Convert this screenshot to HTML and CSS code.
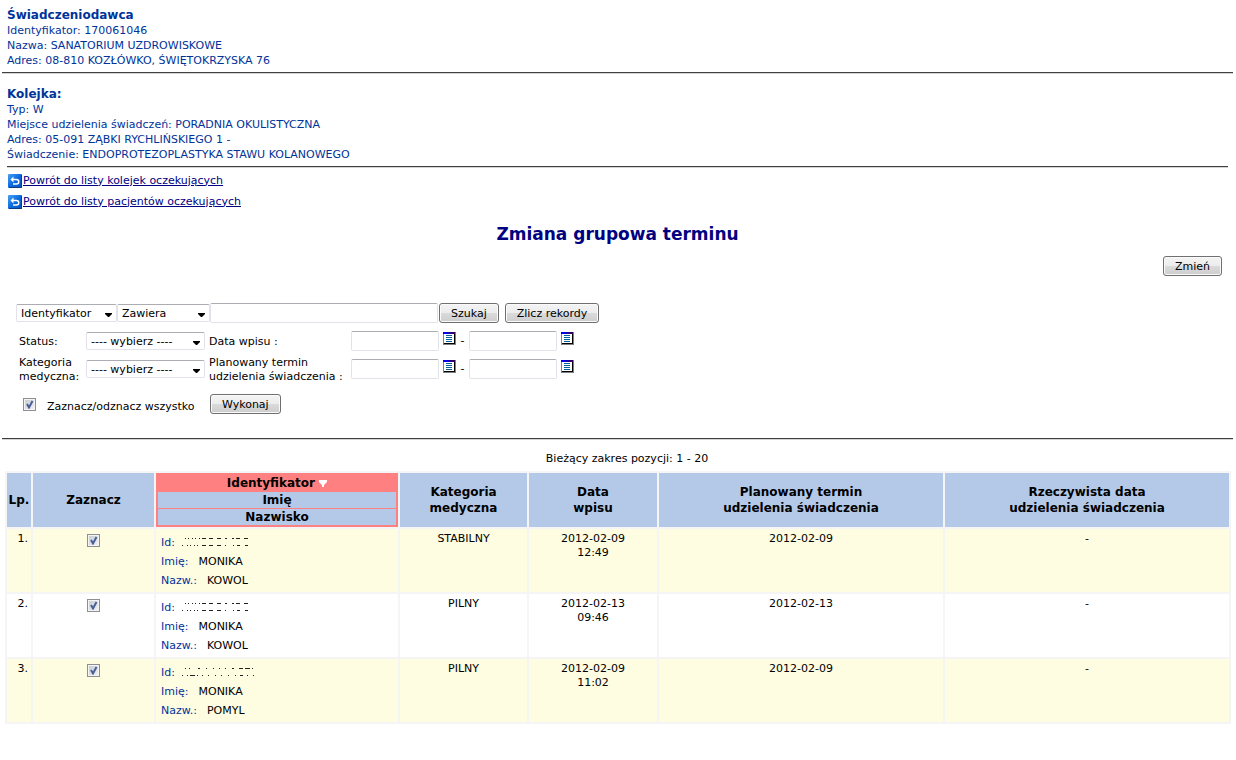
FILE: index.html
```html
<!DOCTYPE html>
<html lang="pl">
<head>
<meta charset="utf-8">
<title>Zmiana grupowa terminu</title>
<link rel="stylesheet" href="styles.css">
</head>
<body>
<svg class="defs" aria-hidden="true">
  <defs>
    <linearGradient id="blue" x1="0" y1="0" x2="1" y2="1"><stop offset="0" stop-color="#4aa0f4"/><stop offset=".5" stop-color="#0a6be0"/><stop offset="1" stop-color="#0b51b8"/></linearGradient>
    <linearGradient id="bar" x1="0" y1="0" x2="1" y2="0"><stop offset=".2" stop-color="#0000ff"/><stop offset=".8" stop-color="#300060"/></linearGradient>
    <symbol id="back" viewBox="0 0 14 14">
      <rect width="14" height="14" rx="1" fill="url(#blue)"/>
      <path d="M13.5 1v12.5H1" fill="none" stroke="#0a3c82"/>
      <path d="M5 5.500h3.500a2 2 0 0 1 0 4.500H5" fill="none" stroke="#fff" stroke-width="1.500"/>
      <path d="M2.500 5.500 5.500 2.500v6z" fill="#fff"/>
    </symbol>
    <symbol id="calendar" viewBox="0 0 13 13">
      <rect width="13" height="13" fill="#808080"/>
      <rect x="1" y="1" width="11" height="11" fill="#fff"/>
      <path d="M11.500 1v11M1 11.500h11" stroke="#000"/>
      <rect width="12" height="2" fill="url(#bar)"/>
      <path d="M3 3.500h6M3 5.500h6M3 7.500h6M3 9.500h6" stroke="#00609c"/>
    </symbol>
    <symbol id="masked-a" viewBox="0 0 68 8">
      <path d="M3 .5h1M6 .5h1M10 .5h1M13 .5h1M17 .5h1M20 .5h4M27 .5h4M35 .5h4M43 .5h2M50 .5h2M54 .5h4M62 .5h4M0 7.500h1M5 7.500h1M8 7.500h1M12 7.500h1M15 7.500h1M20 7.500h4M27 7.500h4M35 7.500h4M43 7.500h1M51 7.500h1M55 7.500h3M63 7.500h3" stroke="#222"/>
    </symbol>
    <symbol id="masked-b" viewBox="0 0 74 8">
      <path d="M3 .5h1M7 .5h1M16 .5h2M24 .5h1M31 .5h1M37 .5h1M43 .5h1M50 .5h2M57 .5h4M63 .5h5M70 .5h1M0 7.500h1M5 7.500h1M8 7.500h5M15 7.500h1M20 7.500h1M26 7.500h1M33 7.500h1M39 7.500h1M46 7.500h1M53 7.500h1M58 7.500h3M65 7.500h1M71 7.500h1" stroke="#222"/>
    </symbol>
  </defs>
</svg>

<header class="info">
  <h2>Świadczeniodawca</h2>
  <p>Identyfikator: 170061046</p>
  <p>Nazwa: SANATORIUM UZDROWISKOWE</p>
  <p>Adres: 08-810 KOZŁÓWKO, ŚWIĘTOKRZYSKA 76</p>
</header>
<hr>
<section class="info queue">
  <h2>Kolejka:</h2>
  <p>Typ: W</p>
  <p>Miejsce udzielenia świadczeń: PORADNIA OKULISTYCZNA</p>
  <p>Adres: 05-091 ZĄBKI RYCHLIŃSKIEGO 1 -</p>
  <p>Świadczenie: ENDOPROTEZOPLASTYKA STAWU KOLANOWEGO</p>
</section>
<hr class="inner">
<nav class="links">
  <a href="#kolejki"><svg width="14" height="14" aria-hidden="true"><use href="#back"/></svg><span>Powrót do listy kolejek oczekujących</span></a>
  <a href="#pacjenci"><svg width="14" height="14" aria-hidden="true"><use href="#back"/></svg><span>Powrót do listy pacjentów oczekujących</span></a>
</nav>

<main>
  <h1>Zmiana grupowa terminu</h1>
  <div class="actions"><button type="button" class="btn">Zmień</button></div>

  <form class="filters">
    <div class="search">
      <select class="pick field" aria-label="Pole"><option>Identyfikator</option></select>
      <select class="pick mode" aria-label="Warunek"><option>Zawiera</option></select>
      <input type="text" class="text query" aria-label="Szukany tekst">
      <button type="button" class="btn">Szukaj</button>
      <button type="button" class="btn count">Zlicz rekordy</button>
    </div>
    <div class="criteria">
      <label for="status">Status:</label>
      <select class="pick" id="status"><option>---- wybierz ----</option></select>
      <label for="entry-from">Data wpisu :</label>
      <div class="range">
        <input type="text" class="text" id="entry-from">
        <button type="button" class="cal" aria-label="Kalendarz"><svg width="13" height="13"><use href="#calendar"/></svg></button>
        <span class="dash">-</span>
        <input type="text" class="text" aria-label="Data wpisu do">
        <button type="button" class="cal" aria-label="Kalendarz"><svg width="13" height="13"><use href="#calendar"/></svg></button>
      </div>
      <label for="category">Kategoria<br>medyczna:</label>
      <select class="pick" id="category"><option>---- wybierz ----</option></select>
      <label for="plan-from">Planowany termin<br>udzielenia świadczenia :</label>
      <div class="range">
        <input type="text" class="text" id="plan-from">
        <button type="button" class="cal" aria-label="Kalendarz"><svg width="13" height="13"><use href="#calendar"/></svg></button>
        <span class="dash">-</span>
        <input type="text" class="text" aria-label="Planowany termin do">
        <button type="button" class="cal" aria-label="Kalendarz"><svg width="13" height="13"><use href="#calendar"/></svg></button>
      </div>
    </div>
    <div class="bulk">
      <input type="checkbox" class="check" id="all" checked>
      <label for="all">Zaznacz/odznacz wszystko</label>
      <button type="button" class="btn">Wykonaj</button>
    </div>
  </form>
  <hr>

  <p class="position">Bieżący zakres pozycji: 1 - 20</p>
  <table class="list">
    <colgroup><col class="c-no"><col class="c-check"><col class="c-person"><col class="c-cat"><col class="c-date"><col><col></colgroup>
    <thead>
      <tr>
        <th>Lp.</th>
        <th>Zaznacz</th>
        <th class="sort">
          <div class="sorted">Identyfikator <svg width="8" height="7" viewBox="0 0 8 7" aria-hidden="true"><path d="M0 0h8v2L5 5v2H3V5L0 2z" fill="#fff"/></svg></div>
          <div>Imię</div>
          <div class="last">Nazwisko</div>
        </th>
        <th>Kategoria<br>medyczna</th>
        <th>Data<br>wpisu</th>
        <th>Planowany termin<br>udzielenia świadczenia</th>
        <th>Rzeczywista data<br>udzielenia świadczenia</th>
      </tr>
    </thead>
    <tbody>
      <tr>
        <td class="no">1.</td>
        <td><input type="checkbox" class="check" aria-label="Zaznacz 1" checked></td>
        <td class="person">
          <div><b>Id:</b><svg width="68" height="8" aria-hidden="true"><use href="#masked-a"/></svg></div>
          <div><b>Imię:</b>&nbsp; MONIKA</div>
          <div><b>Nazw.:</b>&nbsp; KOWOL</div>
        </td>
        <td>STABILNY</td><td>2012-02-09<br>12:49</td><td>2012-02-09</td><td>-</td>
      </tr>
      <tr>
        <td class="no">2.</td>
        <td><input type="checkbox" class="check" aria-label="Zaznacz 2" checked></td>
        <td class="person">
          <div><b>Id:</b><svg width="68" height="8" aria-hidden="true"><use href="#masked-a"/></svg></div>
          <div><b>Imię:</b>&nbsp; MONIKA</div>
          <div><b>Nazw.:</b>&nbsp; KOWOL</div>
        </td>
        <td>PILNY</td><td>2012-02-13<br>09:46</td><td>2012-02-13</td><td>-</td>
      </tr>
      <tr>
        <td class="no">3.</td>
        <td><input type="checkbox" class="check" aria-label="Zaznacz 3" checked></td>
        <td class="person">
          <div><b>Id:</b><svg width="74" height="8" aria-hidden="true"><use href="#masked-b"/></svg></div>
          <div><b>Imię:</b>&nbsp; MONIKA</div>
          <div><b>Nazw.:</b>&nbsp; POMYL</div>
        </td>
        <td>PILNY</td><td>2012-02-09<br>11:02</td><td>2012-02-09</td><td>-</td>
      </tr>
    </tbody>
  </table>
</main>
</body>
</html>
```
FILE: styles.css
```css
* { box-sizing: border-box; }
body {
  margin: 0 3px 0 2px;
  padding-top: 7px;
  background: #fff;
  color: #000;
  font: 11px/14px Verdana, "DejaVu Sans", sans-serif;
}
.defs { position: absolute; width: 0; height: 0; }
h1, h2, p { margin: 0; }
input, select, button { font: inherit; color: inherit; margin: 0; }
hr {
  height: 2px;
  margin: 0;
  border: 0;
  border-top: 1px solid #404040;
  border-bottom: 1px solid #d4d4d4;
}
hr.inner { margin: 0 5px; }

.info { padding: 0 5px; color: #039; line-height: 15px; }
.info h2 { font-size: 12px; line-height: 16px; }
header.info { padding-bottom: 4px; }
.queue { padding-top: 12px; padding-bottom: 4px; }

.links { display: flex; flex-direction: column; align-items: flex-start; padding: 2px 6px 0; }
.links a { display: flex; align-items: center; height: 21px; color: #000080; text-decoration: none; }
.links span { margin-left: 1px; text-decoration: underline; }

h1 { margin-top: 10px; color: #000080; font-size: 17px; line-height: 24px; text-align: center; }
.actions { display: flex; justify-content: flex-end; margin: 10px 11px 27px 0; }

.btn {
  height: 20px;
  padding: 1px 11px 0;
  border: 1px solid #707070;
  border-radius: 3px;
  background: linear-gradient(#f4f4f4, #ececec 48%, #dadada 52%, #cdcdcd);
  box-shadow: inset 0 0 0 1px #fafafa;
  line-height: 16px;
  white-space: nowrap;
}
.text {
  width: 88px;
  height: 20px;
  border: 1px solid #e2e3ea;
  border-top-color: #abadb3;
  border-radius: 2px;
  background: #fff;
}
.pick {
  appearance: none;
  height: 18px;
  width: 119px;
  padding: 1px 4px 0;
  border: 1px solid #e2e3ea;
  border-top-color: #abadb3;
  border-radius: 2px;
  background: #fff url("data:image/svg+xml,%3Csvg xmlns='http://www.w3.org/2000/svg' width='7' height='4'%3E%3Cpath d='M0 0h7v1L4 4H3L0 1z'/%3E%3C/svg%3E") no-repeat right 4px top 8px;
  line-height: 15px;
}
.check {
  appearance: none;
  width: 13px;
  height: 13px;
  border: 1px solid #8e8f8f;
  background: url("data:image/svg+xml,%3Csvg xmlns='http://www.w3.org/2000/svg' width='11' height='11'%3E%3Cpath d='M3 5l2 3.500L8.500 2' fill='none' stroke='%234a5f97' stroke-width='2'/%3E%3C/svg%3E"), linear-gradient(135deg, #c4c9d1, #f3f4f6);
  box-shadow: inset 0 0 0 1px #f4f4f4;
}

.filters { padding: 0 14px 24px; }
.search { display: flex; align-items: center; }
.field { width: 101px; }
.mode { width: 93px; }
.query { width: 228px; margin-right: 1px; }
.count { margin-left: 6px; }
.criteria {
  display: grid;
  grid-template-columns: 67px 123px 142px auto;
  justify-content: start;
  align-items: center;
  grid-auto-rows: 28px;
  padding: 4px 3px;
}
.criteria label { padding-top: 1px; }
.range { display: flex; align-items: center; }
.cal { height: 18px; width: 13px; margin-left: 4px; padding: 0 0 5px; border: 0; background: none; }
.cal svg { display: block; }
.dash { width: 13px; text-align: center; }
.bulk { display: flex; align-items: center; margin-top: 7px; padding-left: 7px; }
.bulk label { width: 163px; margin-left: 11px; padding-top: 6px; }

.position { margin: 12px 0 5px; padding-left: 19px; text-align: center; }
.list {
  width: calc(100% - 5px);
  margin-left: 3px;
  border-spacing: 2px;
  table-layout: fixed;
  background: #f5f5f5;
}
.c-no { width: 24px; }
.c-check { width: 121px; }
.c-person { width: 242px; }
.c-cat { width: 127px; }
.c-date { width: 128px; }
.list th { padding: 0; background: #b4c9e8; font-size: 12px; line-height: 16px; }
.list .sort { padding: 2px; background: #ff8080; }
.sort div { background: #b4c9e8; }
.sort .sorted { background: none; line-height: 17px; }
.sort .last { border-top: 1px solid #ff8080; }
.list td { height: 63px; padding: 3px 0 0; background: #fff; text-align: center; vertical-align: top; }
.list tbody tr:nth-child(odd) td { background: #fefce1; }
.list .no { padding-right: 3px; text-align: right; }
td .check { display: block; margin: 2px auto 0; }
.list .person { padding: 4px 5px 2px; line-height: 19px; text-align: left; }
.person b { margin-right: 3px; color: #039; font-weight: normal; }
.person svg { margin-left: 4px; }
```
